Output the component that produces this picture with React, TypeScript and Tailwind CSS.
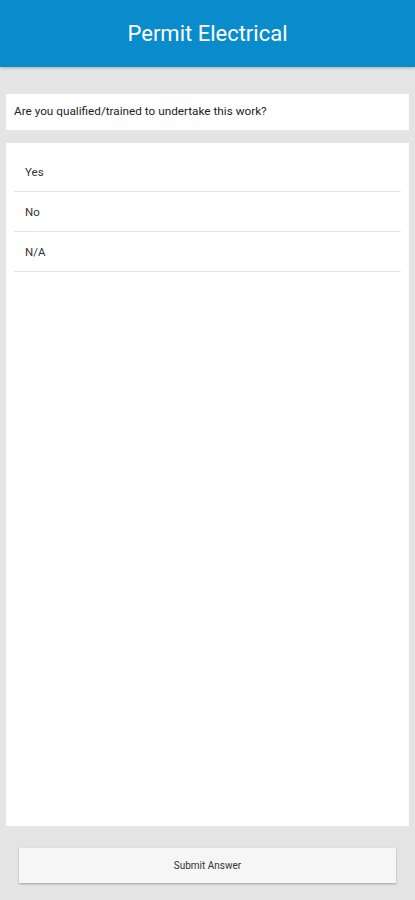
import React, { useState } from 'react';

const options = ['Yes', 'No', 'N/A'];

export default function App() {
  const [answer, setAnswer] = useState<string | null>(null);

  return (
    <div className="h-[900px] flex flex-col bg-[#e4e4e4] font-['Roboto',sans-serif]">
      <header className="h-[67px] shrink-0 bg-[#0a8bcb] flex items-center justify-center shadow-[0_1px_3px_rgba(0,0,0,0.25)]">
        <h1 className="text-white text-[22px] leading-none">Permit Electrical</h1>
      </header>

      <main className="flex-1 flex flex-col px-[6px] pt-[27px]">
        <div className="h-[36px] bg-white flex items-center px-[8px] text-[11.75px] text-[#222]">
          Are you qualified/trained to undertake this work?
        </div>

        <div className="mt-[13px] flex-1 bg-white px-[8px] pt-[9px]">
          {options.map((o) => (
            <button
              key={o}
              onClick={() => setAnswer(o)}
              className={`w-full h-[40px] flex items-center pl-[11px] pt-[2px] text-[11.5px] text-[#333] border-b border-[#e6e6e6] text-left ${
                answer === o ? 'bg-[#f3f3f3]' : ''
              }`}
            >
              {o}
            </button>
          ))}
        </div>
      </main>

      <div className="px-[19px] pt-[22px] pb-[17px]">
        <button className="w-full h-[35px] bg-[#f6f6f6] text-[10px] text-[#333] shadow-[0_1px_2px_rgba(0,0,0,0.3)]">
          Submit Answer
        </button>
      </div>
    </div>
  );
}
